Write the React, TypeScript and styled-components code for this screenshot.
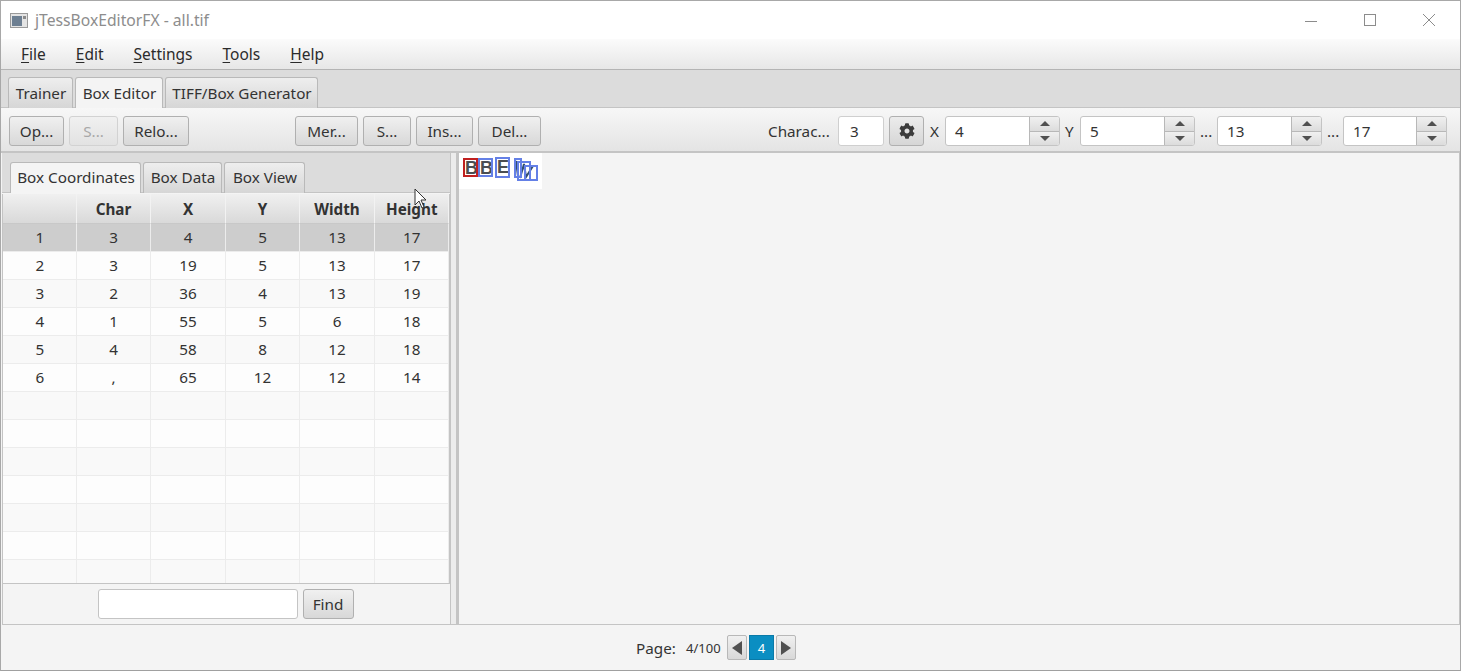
import styled, { createGlobalStyle } from 'styled-components'
import { FaCog } from 'react-icons/fa'

const rows = [
    ['1', '3', '4', '5', '13', '17'],
    ['2', '3', '19', '5', '13', '17'],
    ['3', '2', '36', '4', '13', '19'],
    ['4', '1', '55', '5', '6', '18'],
    ['5', '4', '58', '8', '12', '18'],
    ['6', ',', '65', '12', '12', '14'],
    ['', '', '', '', '', ''],
    ['', '', '', '', '', ''],
    ['', '', '', '', '', ''],
    ['', '', '', '', '', ''],
    ['', '', '', '', '', ''],
    ['', '', '', '', '', ''],
    ['', '', '', '', '', ''],
]

const columns = ['', 'Char', 'X', 'Y', 'Width', 'Height']

function Spin({ value, width }: { value: string, width: number }) {
    return (
        <Spinner $width={ width }>
            <SpinValue>{ value }</SpinValue>
            <SpinButtons>
                <SpinButton><UpArrow/></SpinButton>
                <SpinButton><DownArrow/></SpinButton>
            </SpinButtons>
        </Spinner>
    )
}

function App() {
    return (
        <Window>
            <GlobalStyle/>
            <TitleBar>
                <AppIcon viewBox="0 0 18 15">
                    <rect x="0.5" y="0.5" width="17" height="14" fill="#e4e4e4" stroke="#9a9a9a"/>
                    <rect x="2" y="3" width="10" height="10" fill="#6d7f92"/>
                    <rect x="13" y="3" width="3" height="3" fill="#8a8a8a"/>
                </AppIcon>
                <Title>jTessBoxEditorFX - all.tif</Title>
                <WindowControls>
                    <WindowControl viewBox="0 0 13 13"><path d="M0 7.5h12" stroke="#8c8c8c" fill="none"/></WindowControl>
                    <WindowControl viewBox="0 0 13 13"><rect x="0.5" y="0.5" width="11" height="11" stroke="#8c8c8c" fill="none"/></WindowControl>
                    <WindowControl viewBox="0 0 13 13"><path d="M0 0l12 12M12 0L0 12" stroke="#8c8c8c" fill="none"/></WindowControl>
                </WindowControls>
            </TitleBar>

            <MenuBar>
                <MenuItem><u>F</u>ile</MenuItem>
                <MenuItem><u>E</u>dit</MenuItem>
                <MenuItem><u>S</u>ettings</MenuItem>
                <MenuItem><u>T</u>ools</MenuItem>
                <MenuItem><u>H</u>elp</MenuItem>
            </MenuBar>

            <MainTabs>
                <Tab $width={ 65 }>Trainer</Tab>
                <Tab $width={ 88 } $active>Box Editor</Tab>
                <Tab $width={ 153 }>TIFF/Box Generator</Tab>
            </MainTabs>

            <ToolBar>
                <ButtonGroup>
                    <Button $width={ 55 }>Op...</Button>
                    <Button $width={ 49 } disabled>S...</Button>
                    <Button $width={ 66 }>Relo...</Button>
                </ButtonGroup>
                <MiddleGroup>
                    <Button $width={ 63 }>Mer...</Button>
                    <Button $width={ 48 }>S...</Button>
                    <Button $width={ 57 }>Ins...</Button>
                    <Button $width={ 63 }>Del...</Button>
                </MiddleGroup>
                <CoordGroup>
                    <Label $width={ 70 }>Charac...</Label>
                    <CharInput>3</CharInput>
                    <GearButton><FaCog size={ 16 } color="#3c3c3c"/></GearButton>
                    <Label $width={ 15 }>X</Label>
                    <Spin value="4" width={ 115 }/>
                    <Label $width={ 20 } $indent={ 5 }>Y</Label>
                    <Spin value="5" width={ 115 }/>
                    <Label $width={ 22 } $indent={ 5 }>...</Label>
                    <Spin value="13" width={ 105 }/>
                    <Label $width={ 21 } $indent={ 5 }>...</Label>
                    <Spin value="17" width={ 104 }/>
                </CoordGroup>
            </ToolBar>

            <Split>
                <LeftPanel>
                    <SubTabs>
                        <SubTab $width={ 131 } $active>Box Coordinates</SubTab>
                        <SubTab $width={ 79 }>Box Data</SubTab>
                        <SubTab $width={ 81 }>Box View</SubTab>
                    </SubTabs>
                    <Table>
                        <HeadRow>
                            { columns.map((name, i) => <HeadCell key={ i }>{ name }</HeadCell>) }
                        </HeadRow>
                        { rows.map((row, r) => (
                            <Row key={ r } $selected={ r === 0 } $odd={ r % 2 === 1 }>
                                { row.map((value, c) => <Cell key={ c }>{ value }</Cell>) }
                            </Row>
                        )) }
                    </Table>
                    <FindBar>
                        <FindInput/>
                        <Button $width={ 51 }>Find</Button>
                    </FindBar>
                </LeftPanel>
                <Divider/>
                <RightPanel>
                    <BoxImage viewBox="0 0 83 36">
                        <rect width="83" height="36" fill="#fff"/>
                        <g fontFamily="Liberation Sans, sans-serif" fontWeight="700" fill="#4a4e52">
                            <text x="6" y="21" fontSize="18">B</text>
                            <text x="21" y="21" fontSize="18">B</text>
                            <text x="38" y="20" fontSize="18">E</text>
                        </g>
                        <path d="M58 8l-2 15M61 25l4-14 2 13 7-11" stroke="#33506e" strokeWidth="2" fill="none"/>
                        <g fill="none" stroke="#6480e6" strokeWidth="2">
                            <rect x="20" y="6" width="13" height="17"/>
                            <rect x="37" y="5" width="13" height="19"/>
                            <rect x="56" y="6" width="6" height="18"/>
                            <rect x="59" y="9" width="12" height="18"/>
                            <rect x="66" y="13" width="12" height="14"/>
                        </g>
                        <rect x="5" y="6" width="13" height="17" fill="none" stroke="#c02020" strokeWidth="2"/>
                    </BoxImage>
                </RightPanel>
                <Cursor viewBox="0 0 14 22">
                    <path d="M1 1v16l4-4 3 7 2-1-3-7h5z" fill="#fff" stroke="#333"/>
                </Cursor>
            </Split>

            <StatusBar>
                <PageLabel>Page:</PageLabel>
                <PageCount>4/100</PageCount>
                <Pager>
                    <PageButton><LeftArrow/></PageButton>
                    <CurrentPage>4</CurrentPage>
                    <PageButton><RightArrow/></PageButton>
                </Pager>
            </StatusBar>
        </Window>
    )
}

const GlobalStyle = createGlobalStyle`
  html, body {
    margin: 0;
    padding: 0;
    background: #ffffff;
  }

  * {
    box-sizing: border-box;
  }
`

const Window = styled.div`
  position: relative;
  width: 1461px;
  height: 671px;
  overflow: hidden;
  display: flex;
  flex-direction: column;
  border: 1px solid #a8a8a8;
  border-bottom: 1px solid #a0a0a0;
  font-family: "Noto Sans", "Open Sans", sans-serif;
  font-size: 15.25px;
  color: #333333;
  background: #f4f4f4;
`

const TitleBar = styled.div`
  height: 38px;
  flex: none;
  display: flex;
  align-items: center;
  padding-left: 9px;
  background: #ffffff;
`

const AppIcon = styled.svg`
  width: 18px;
  height: 15px;
  margin-right: 7px;
`

const Title = styled.div`
  color: #8d8d8d;
  font-size: 15.7px;
`

const WindowControls = styled.div`
  margin-left: auto;
  display: flex;
  align-items: center;
  gap: 46px;
  padding-right: 24px;
`

const WindowControl = styled.svg`
  width: 13px;
  height: 13px;
`

const MenuBar = styled.div`
  height: 31px;
  flex: none;
  display: flex;
  align-items: center;
  gap: 30px;
  padding: 0 0 0 20px;
  background: linear-gradient(#fbfbfb, #e7e7e7);
  border-bottom: 1px solid #b4b4b4;
`

const MenuItem = styled.span`
  font-size: 15.5px;
  color: #2b2b2b;

  u {
    text-underline-offset: 2px;
  }
`

const MainTabs = styled.div`
  height: 38px;
  flex: none;
  display: flex;
  align-items: flex-end;
  gap: 2px;
  padding-left: 7px;
  background: #dcdcdc;
  border-bottom: 1px solid #c4c4c4;
`

const SubTabs = styled.div`
  height: 40px;
  flex: none;
  display: flex;
  align-items: flex-end;
  gap: 2px;
  padding-left: 8px;
  background: #dcdcdc;
  border-bottom: 1px solid #c4c4c4;
`

const Tab = styled.div<{ $width: number, $active?: boolean }>`
  width: ${ props => props.$width }px;
  height: 31px;
  margin-bottom: -1px;
  padding-left: 1px;
  display: flex;
  align-items: center;
  justify-content: center;
  border: 1px solid #b9b9b9;
  border-bottom: none;
  border-radius: 3px 3px 0 0;
  background: ${ props => props.$active ? '#f4f4f4' : 'linear-gradient(#eeeeee, #d6d6d6)' };
  ${ props => props.$active ? 'position: relative; z-index: 1;' : '' }
  color: #333333;
`

const SubTab = styled(Tab)`
  padding-bottom: 2px;
`

const ToolBar = styled.div`
  height: 45px;
  flex: none;
  display: flex;
  align-items: center;
  padding: 3px 13px 0 8px;
  background: linear-gradient(#f7f7f7, #e4e4e4);
  border-bottom: 2px solid #c4c4c4;
`

const ButtonGroup = styled.div`
  display: flex;
  gap: 5px;
`

const MiddleGroup = styled(ButtonGroup)`
  margin-left: 106px;
`

const CoordGroup = styled.div`
  margin-left: auto;
  display: flex;
  align-items: center;
`

const Button = styled.button<{ $width: number }>`
  width: ${ props => props.$width }px;
  height: 30px;
  padding: 0;
  font: inherit;
  color: #333333;
  border: 1px solid #b0b0b0;
  border-radius: 3px;
  background: linear-gradient(#f0f0f0, #d8d8d8);

  &:disabled {
    color: #a8a8a8;
    border-color: #d2d2d2;
    background: linear-gradient(#f0f0f0, #e2e2e2);
  }
`

const Label = styled.span<{ $width: number, $indent?: number }>`
  width: ${ props => props.$width }px;
  padding-left: ${ props => props.$indent || 0 }px;
  flex: none;
  white-space: nowrap;
`

const CharInput = styled.div`
  width: 46px;
  height: 30px;
  line-height: 28px;
  padding-left: 11px;
  border: 1px solid #cfcfcf;
  border-radius: 3px;
  background: #ffffff;
`

const GearButton = styled.div`
  width: 35px;
  height: 30px;
  margin: 0 6px 0 5px;
  display: flex;
  align-items: center;
  justify-content: center;
  border: 1px solid #b0b0b0;
  border-radius: 3px;
  background: linear-gradient(#ececec, #d6d6d6);
`

const Spinner = styled.div<{ $width: number }>`
  width: ${ props => props.$width }px;
  height: 30px;
  display: flex;
  border: 1px solid #c4c4c4;
  border-radius: 3px;
  background: #ffffff;
  overflow: hidden;
`

const SpinValue = styled.div`
  flex: 1;
  line-height: 28px;
  padding-left: 9px;
`

const SpinButtons = styled.div`
  width: 30px;
  display: flex;
  flex-direction: column;
  border-left: 1px solid #b8b8b8;
`

const SpinButton = styled.div`
  flex: 1;
  display: flex;
  align-items: center;
  justify-content: center;
  background: linear-gradient(#f0f0f0, #dcdcdc);

  & + & {
    border-top: 1px solid #b8b8b8;
  }
`

const UpArrow = styled.div`
  border-left: 5px solid transparent;
  border-right: 5px solid transparent;
  border-bottom: 5px solid #505050;
`

const DownArrow = styled.div`
  border-left: 5px solid transparent;
  border-right: 5px solid transparent;
  border-top: 5px solid #505050;
`

const Split = styled.div`
  position: relative;
  flex: 1;
  min-height: 0;
  display: flex;
  padding-left: 1px;
`

const LeftPanel = styled.div`
  width: 448px;
  flex: none;
  display: flex;
  flex-direction: column;
  border-bottom: 1px solid #c4c4c4;
`

const Divider = styled.div`
  width: 9px;
  flex: none;
  background: #ececec;
  border-left: 1px solid #c4c4c4;
  border-right: 3px solid #c4c4c4;
  border-bottom: 1px solid #c4c4c4;
`

const RightPanel = styled.div`
  flex: 1;
  background: #f4f4f4;
  border-right: 1px solid #c4c4c4;
  border-bottom: 1px solid #c4c4c4;
`

const BoxImage = styled.svg`
  display: block;
  width: 83px;
  height: 36px;
`

const Table = styled.div`
  flex: 1;
  min-height: 0;
  overflow: hidden;
  margin-top: 1px;
  background: #ffffff;
  border-left: 1px solid #c4c4c4;
  border-bottom: 1px solid #c4c4c4;
  border-right: 1px solid #c4c4c4;
`

const HeadRow = styled.div`
  height: 30px;
  display: grid;
  grid-template-columns: 73.5px 74px 75px 74px 75px 1fr;
`

const HeadCell = styled.div`
  display: flex;
  align-items: center;
  justify-content: center;
  padding-left: 1px;
  font-weight: 700;
  color: #333333;
  background: linear-gradient(#f0f0f0, #d9d9d9);
  border-right: 1px solid #f2f2f2;
  border-bottom: 1px solid #c8c8c8;
`

const Row = styled.div<{ $selected: boolean, $odd: boolean }>`
  height: 28px;
  display: grid;
  grid-template-columns: 73.5px 74px 75px 74px 75px 1fr;
  background: ${ props => props.$selected ? '#cdcdcd' : props.$odd ? '#fdfdfd' : '#f9f9f9' };
`

const Cell = styled.div`
  display: flex;
  align-items: center;
  justify-content: center;
  padding: 0 0 1px 1px;
  color: #333333;
  border-right: 1px solid #ececec;
  border-bottom: 1px solid #ececec;
`

const FindBar = styled.div`
  height: 40px;
  flex: none;
  display: flex;
  align-items: center;
  justify-content: center;
  gap: 5px;
  padding-right: 2px;
  background: #f4f4f4;
  border-left: 1px solid #c4c4c4;
`

const FindInput = styled.input`
  width: 200px;
  height: 30px;
  border: 1px solid #c4c4c4;
  border-radius: 3px;
  background: #ffffff;
`

const Cursor = styled.svg`
  position: absolute;
  left: 413px;
  top: 35px;
  width: 14px;
  height: 22px;
`

const StatusBar = styled.div`
  height: 45px;
  flex: none;
  display: flex;
  align-items: center;
  padding-left: 635px;
  background: #f4f4f4;
`

const PageLabel = styled.span`
  width: 50px;
`

const PageCount = styled.span`
  width: 41px;
  font-size: 13px;
`

const Pager = styled.div`
  display: flex;
  align-items: center;
  gap: 2px;
`

const PageButton = styled.div`
  width: 20px;
  height: 25px;
  display: flex;
  align-items: center;
  justify-content: center;
  border: 1px solid #b8b8b8;
  border-radius: 2px;
  background: linear-gradient(#f0f0f0, #d8d8d8);
`

const CurrentPage = styled.div`
  width: 25px;
  height: 25px;
  display: flex;
  align-items: center;
  justify-content: center;
  font-size: 13px;
  color: #ffffff;
  background: #0b8ec2;
  border: 1px solid #0a7aa8;
`

const LeftArrow = styled.div`
  border-top: 7px solid transparent;
  border-bottom: 7px solid transparent;
  border-right: 10px solid #505050;
`

const RightArrow = styled.div`
  border-top: 7px solid transparent;
  border-bottom: 7px solid transparent;
  border-left: 10px solid #505050;
`

export default App
